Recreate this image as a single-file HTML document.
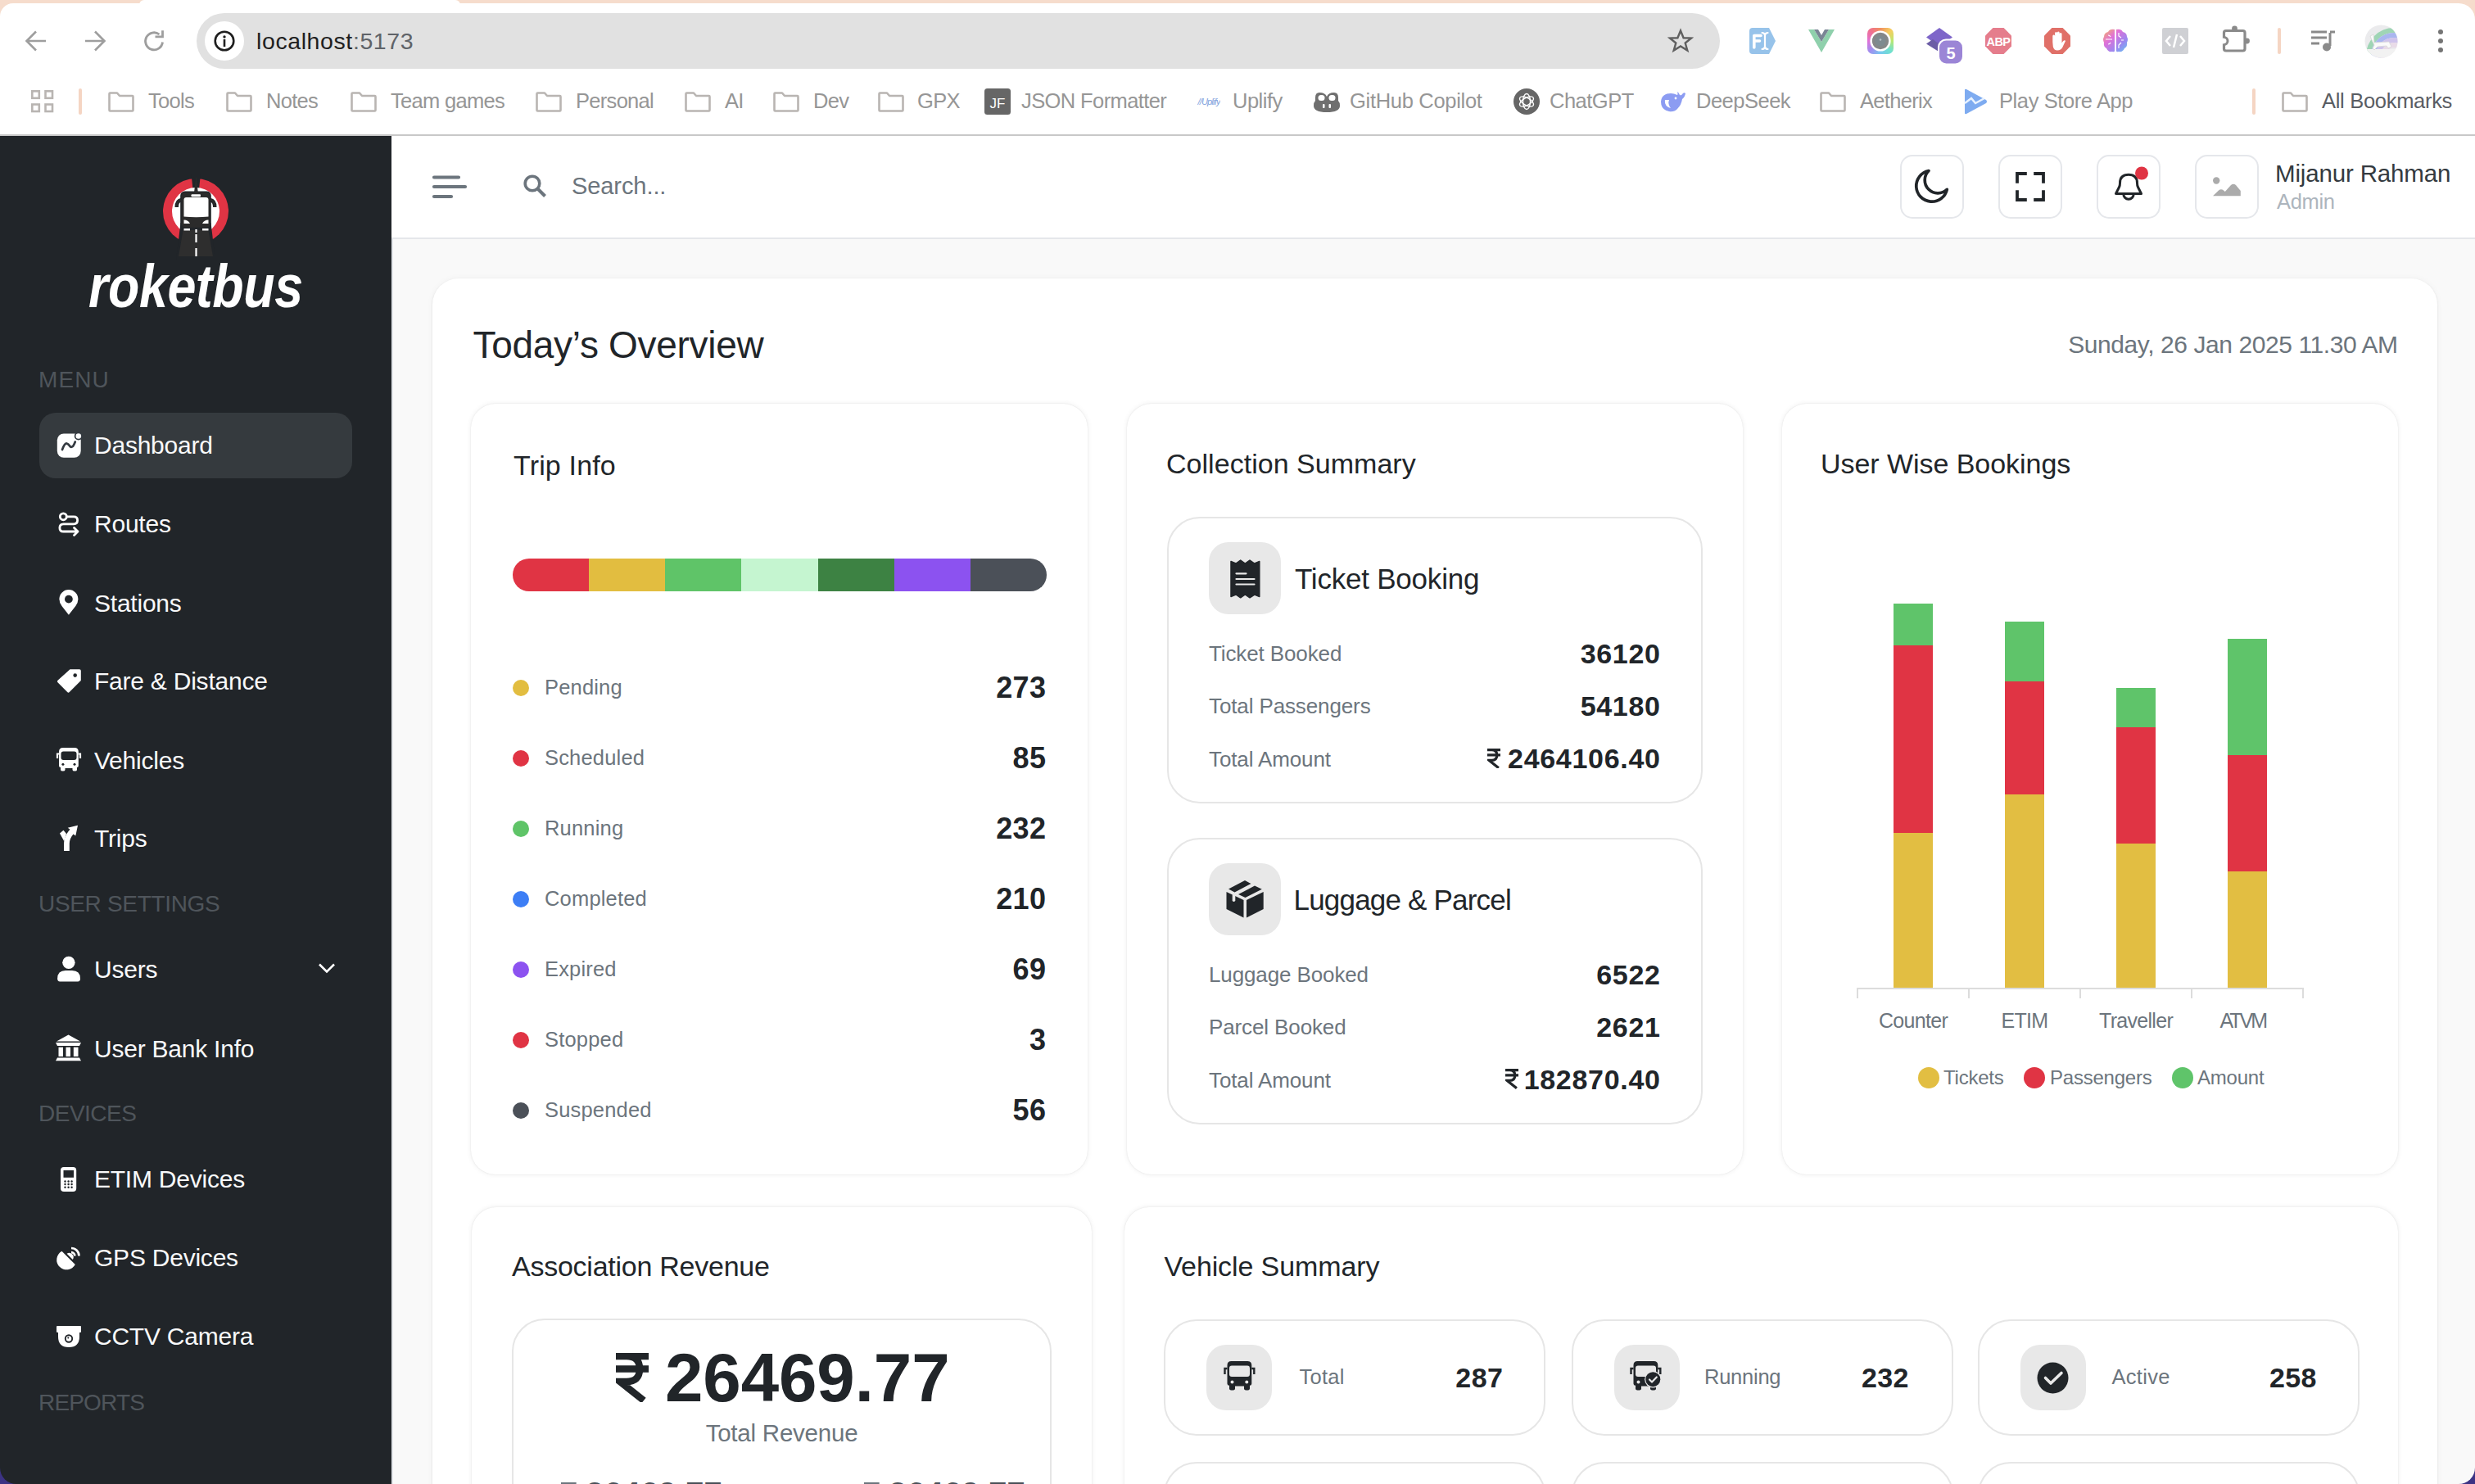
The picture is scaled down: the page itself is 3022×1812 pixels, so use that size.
<!DOCTYPE html>
<html><head><meta charset="utf-8"><title>roketbus</title>
<style>
*{box-sizing:border-box;margin:0;padding:0}
html,body{width:3022px;height:1812px;overflow:hidden;background:#f6dccc;font-family:"Liberation Sans",sans-serif;}
.a{position:absolute;display:block}
.t{position:absolute;white-space:nowrap;line-height:1}
</style></head><body>
<div class="a" style="left:0px;top:1740px;width:3022px;height:72px;background:#3c3384"></div>
<div class="a" style="left:0px;top:4px;width:3022px;height:162px;background:#fff;border-radius:16px 20px 0 0"></div>
<div class="a" style="left:170px;top:0px;width:392px;height:8px;background:#fff;border-radius:6px 6px 0 0"></div>
<div class="a" style="left:240px;top:16px;width:1860px;height:68px;background:#e1e1e1;border-radius:34px"></div>
<div class="a" style="left:250px;top:26px;width:48px;height:48px;background:#fff;border-radius:50%"></div>
<svg class="a" style="left:260px;top:36px;" width="28" height="28" viewBox="0 0 28 28"><circle cx="14" cy="14" r="11.3" fill="none" stroke="#1f1f1f" stroke-width="2.6"/><circle cx="14" cy="9" r="1.7" fill="#1f1f1f"/><rect x="12.7" y="12" width="2.6" height="9" fill="#1f1f1f"/></svg>
<svg class="a" style="left:28px;top:34px;" width="32" height="32" viewBox="0 0 32 32"><path d="M5 16H28M16 4.5L4.5 16L16 27.5" fill="none" stroke="#9e9e9e" stroke-width="2.6"/></svg>
<svg class="a" style="left:100px;top:34px;" width="32" height="32" viewBox="0 0 32 32"><path d="M27 16H4M16 4.5L27.5 16L16 27.5" fill="none" stroke="#9e9e9e" stroke-width="2.6"/></svg>
<svg class="a" style="left:172px;top:34px;" width="32" height="32" viewBox="0 0 32 32"><path d="M26.5 17.5A10.5 10.5 0 1 1 22.5 8" fill="none" stroke="#9e9e9e" stroke-width="2.8"/><path d="M17.5 10.8H26.5V3.2" fill="none" stroke="#9e9e9e" stroke-width="2.8"/></svg>
<div class="t" style="top:36.37px;font-size:28.5px;color:#1f1f1f;letter-spacing:0.6px;left:313px;">localhost<span style="color:#5f6368">:5173</span></div>
<svg class="a" style="left:2036px;top:34px;" width="32" height="32" viewBox="0 0 32 32"><path d="M16 3.5L19.6 12.3L29 12.6L21.7 18.5L24.3 27.6L16 22.4L7.7 27.6L10.3 18.5L3 12.6L12.4 12.3Z" fill="none" stroke="#5f5f5f" stroke-width="2.4" stroke-linejoin="miter"/></svg>
<svg class="a" style="left:2134px;top:34px;" width="36" height="32" viewBox="0 0 36 32"><path d="M2 4Q2 0 6 0H26L34 16L26 32H6Q2 32 2 28Z" fill="#97c3ea"/><path d="M7.8 24V9.5H16M7.8 16H14.5" stroke="#fff" stroke-width="3.6" fill="none" stroke-linecap="round" stroke-linejoin="round"/><path d="M17.5 6Q20 6 21 8.5Q22 6 24.5 6M21 8.5V23.5M17.5 26Q20 26 21 23.5Q22 26 24.5 26" stroke="#fff" stroke-width="2.2" fill="none" stroke-linecap="round"/></svg>
<svg class="a" style="left:2208px;top:34px;" width="32" height="32" viewBox="0 0 32 32"><path d="M0 2H7L16 17L25 2H32L16 30Z" fill="#8fd0ac"/><path d="M7 2H12L16 9L20 2H25L16 17Z" fill="#7a8595"/></svg>
<div class="a" style="left:2280px;top:34px;width:32px;height:32px;border-radius:7px;background:conic-gradient(from 0deg,#f09060,#f5cf60,#b8e870,#70e0d0,#78c8f0,#a090f0,#e070d8,#f07090,#f09060)"></div>
<svg class="a" style="left:2280px;top:34px;" width="32" height="32" viewBox="0 0 32 32"><circle cx="16" cy="16" r="12.6" fill="#fff"/><circle cx="16" cy="16" r="10.2" fill="#858789"/><circle cx="16" cy="16" r="6.5" fill="#7e8a90"/><circle cx="16" cy="14.5" r="1.3" fill="#b8c0c4"/></svg>
<svg class="a" style="left:2350px;top:32px;" width="48" height="48" viewBox="0 0 48 48"><path d="M2 13.5L18 2L34 13.5L18 25Z" fill="#7e66c9"/><path d="M2 21.5L10 16L18 22L26 16L18 31.5Z" fill="#6c5ea6"/><rect x="16" y="15.5" width="32" height="32" rx="10" fill="#fff"/><rect x="18" y="17.5" width="28" height="28" rx="8.5" fill="#9b85d6"/><text x="32" y="39.5" font-size="20" font-weight="700" fill="#fff" text-anchor="middle" font-family="Liberation Sans">5</text></svg>
<svg class="a" style="left:2424px;top:34px;" width="32" height="32" viewBox="0 0 32 32"><path d="M9.4 0H22.6L32 9.4V22.6L22.6 32H9.4L0 22.6V9.4Z" fill="#e57d8c"/><text x="16" y="21.8" font-size="14.5" font-weight="700" fill="#fff" text-anchor="middle" font-family="Liberation Sans" letter-spacing="-0.6">ABP</text></svg>
<svg class="a" style="left:2496px;top:34px;" width="32" height="32" viewBox="0 0 32 32"><path d="M9.4 0H22.6L32 9.4V22.6L22.6 32H9.4L0 22.6V9.4Z" fill="#e07068"/><path d="M10.3 17.5V10Q10.3 8.4 11.7 8.4Q13.1 8.4 13.1 10V15.5V6.5Q13.1 4.9 14.5 4.9Q15.9 4.9 15.9 6.5V15V6Q15.9 4.4 17.3 4.4Q18.7 4.4 18.7 6V15V7.5Q18.7 5.9 20.1 5.9Q21.5 5.9 21.5 7.5V18.5Q22.5 16.5 24 15.5Q25.5 14.8 26 16Q24 20 22.5 23.5Q20.5 27.5 16 27.5Q12 27.5 10.8 23Z" fill="#fff"/></svg>
<svg class="a" style="left:2566px;top:33px;" width="34" height="34" viewBox="0 0 34 34"><defs><linearGradient id="bg2" x1="0" y1="0" x2="1" y2="1"><stop offset="0" stop-color="#f5b860"/><stop offset=".35" stop-color="#e070d8"/><stop offset=".7" stop-color="#9a88f0"/><stop offset="1" stop-color="#60c8f0"/></linearGradient></defs><path d="M16 3Q10 2 8 6Q3 7 3 12Q1 15 3 19Q2 24 6 26Q8 31 13 30Q16 31 16 29ZM18 3Q24 2 26 6Q31 7 31 12Q33 15 31 19Q32 24 28 26Q26 31 21 30Q18 31 18 29Z" fill="url(#bg2)"/><path d="M5 15H13M8 10Q10 10 11 12M8 21Q10 21 11 19M21 7V11L24 13M24 19L21 22V26M27 16H24" stroke="#fff" stroke-width="1.2" fill="none"/></svg>
<svg class="a" style="left:2640px;top:34px;" width="32" height="32" viewBox="0 0 32 32"><rect width="32" height="32" rx="2" fill="#cfd0d4"/><path d="M10 10L5 16L10 22M22 10L27 16L22 22M18 8L14 24" stroke="#fff" stroke-width="2.5" fill="none"/></svg>
<svg class="a" style="left:2710px;top:30px;" width="40" height="38" viewBox="0 0 40 38"><rect x="5.5" y="7.5" width="25.5" height="24.5" rx="2.5" fill="none" stroke="#8a8a8a" stroke-width="3.2"/><circle cx="18.5" cy="5" r="3.4" fill="#8a8a8a"/><circle cx="33.5" cy="20" r="3.4" fill="#8a8a8a"/><circle cx="5" cy="20" r="3.6" fill="#fff"/><path d="M5.5 15.5A4.5 4.5 0 0 1 5.5 24.5" fill="none" stroke="#8a8a8a" stroke-width="3"/></svg>
<div class="a" style="left:2781px;top:34px;width:4px;height:32px;background:#f5d5c3;border-radius:2px"></div>
<svg class="a" style="left:2820px;top:36px;" width="34" height="28" viewBox="0 0 34 28"><path d="M2 3H21M2 10H21M2 17H12" stroke="#8a8a8a" stroke-width="3"/><path d="M25 4V20" stroke="#8a8a8a" stroke-width="3"/><path d="M25 3H31" stroke="#8a8a8a" stroke-width="3"/><circle cx="21" cy="21.5" r="5" fill="#8a8a8a"/></svg>
<svg class="a" style="left:2887px;top:30px;" width="41" height="41" viewBox="0 0 41 41"><defs><clipPath id="av"><circle cx="20.5" cy="20.5" r="20"/></clipPath></defs><g clip-path="url(#av)"><rect width="41" height="41" fill="#ebebed"/><circle cx="36" cy="38" r="31" fill="none" stroke="#9fd5b5" stroke-width="6"/><circle cx="36" cy="38" r="25" fill="none" stroke="#a9b6ef" stroke-width="6"/><circle cx="36" cy="38" r="19" fill="none" stroke="#cfc3ec" stroke-width="6"/><circle cx="36" cy="38" r="13" fill="none" stroke="#e9dbe8" stroke-width="6"/><rect y="30" width="41" height="11" fill="#f2f2f2"/><path d="M7 14L11 12L12 22L30 21L33 27L29 29L27 26L16 27L12 31L10 29L12 25L9 19Z" fill="#fafafa" stroke="#d8d8d8" stroke-width="0.8"/></g></svg>
<svg class="a" style="left:2972px;top:34px;" width="16" height="32" viewBox="0 0 16 32"><circle cx="8" cy="5" r="3" fill="#757575"/><circle cx="8" cy="16" r="3" fill="#757575"/><circle cx="8" cy="27" r="3" fill="#757575"/></svg>
<svg class="a" style="left:38px;top:110px;" width="28" height="28" viewBox="0 0 28 28"><g fill="none" stroke="#b9b5b2" stroke-width="2.6"><rect x="1.3" y="1.3" width="8.5" height="8.5"/><rect x="17.5" y="1.3" width="8.5" height="8.5"/><rect x="1.3" y="17.5" width="8.5" height="8.5"/><rect x="17.5" y="17.5" width="8.5" height="8.5"/></g></svg>
<div class="a" style="left:96px;top:108px;width:4px;height:32px;background:#f5d5c3;border-radius:2px"></div>
<svg class="a" style="left:132px;top:112px;" width="32" height="25" viewBox="0 0 32 25"><path d="M1.5 2.5Q1.5 1.5 2.5 1.5H11L14 5H29.5Q30.5 5 30.5 6V22.5Q30.5 23.5 29.5 23.5H2.5Q1.5 23.5 1.5 22.5Z" fill="none" stroke="#b9b5b2" stroke-width="2.6" stroke-linejoin="round"/></svg>
<div class="t" style="top:110.91px;font-size:25.5px;color:#969696;letter-spacing:-0.7px;left:181px;">Tools</div>
<svg class="a" style="left:276px;top:112px;" width="32" height="25" viewBox="0 0 32 25"><path d="M1.5 2.5Q1.5 1.5 2.5 1.5H11L14 5H29.5Q30.5 5 30.5 6V22.5Q30.5 23.5 29.5 23.5H2.5Q1.5 23.5 1.5 22.5Z" fill="none" stroke="#b9b5b2" stroke-width="2.6" stroke-linejoin="round"/></svg>
<div class="t" style="top:110.91px;font-size:25.5px;color:#969696;letter-spacing:-0.7px;left:325px;">Notes</div>
<svg class="a" style="left:428px;top:112px;" width="32" height="25" viewBox="0 0 32 25"><path d="M1.5 2.5Q1.5 1.5 2.5 1.5H11L14 5H29.5Q30.5 5 30.5 6V22.5Q30.5 23.5 29.5 23.5H2.5Q1.5 23.5 1.5 22.5Z" fill="none" stroke="#b9b5b2" stroke-width="2.6" stroke-linejoin="round"/></svg>
<div class="t" style="top:110.91px;font-size:25.5px;color:#969696;letter-spacing:-0.7px;left:477px;">Team games</div>
<svg class="a" style="left:654px;top:112px;" width="32" height="25" viewBox="0 0 32 25"><path d="M1.5 2.5Q1.5 1.5 2.5 1.5H11L14 5H29.5Q30.5 5 30.5 6V22.5Q30.5 23.5 29.5 23.5H2.5Q1.5 23.5 1.5 22.5Z" fill="none" stroke="#b9b5b2" stroke-width="2.6" stroke-linejoin="round"/></svg>
<div class="t" style="top:110.91px;font-size:25.5px;color:#969696;letter-spacing:-0.7px;left:703px;">Personal</div>
<svg class="a" style="left:836px;top:112px;" width="32" height="25" viewBox="0 0 32 25"><path d="M1.5 2.5Q1.5 1.5 2.5 1.5H11L14 5H29.5Q30.5 5 30.5 6V22.5Q30.5 23.5 29.5 23.5H2.5Q1.5 23.5 1.5 22.5Z" fill="none" stroke="#b9b5b2" stroke-width="2.6" stroke-linejoin="round"/></svg>
<div class="t" style="top:110.91px;font-size:25.5px;color:#969696;letter-spacing:-0.7px;left:885px;">AI</div>
<svg class="a" style="left:944px;top:112px;" width="32" height="25" viewBox="0 0 32 25"><path d="M1.5 2.5Q1.5 1.5 2.5 1.5H11L14 5H29.5Q30.5 5 30.5 6V22.5Q30.5 23.5 29.5 23.5H2.5Q1.5 23.5 1.5 22.5Z" fill="none" stroke="#b9b5b2" stroke-width="2.6" stroke-linejoin="round"/></svg>
<div class="t" style="top:110.91px;font-size:25.5px;color:#969696;letter-spacing:-0.7px;left:993px;">Dev</div>
<svg class="a" style="left:1072px;top:112px;" width="32" height="25" viewBox="0 0 32 25"><path d="M1.5 2.5Q1.5 1.5 2.5 1.5H11L14 5H29.5Q30.5 5 30.5 6V22.5Q30.5 23.5 29.5 23.5H2.5Q1.5 23.5 1.5 22.5Z" fill="none" stroke="#b9b5b2" stroke-width="2.6" stroke-linejoin="round"/></svg>
<div class="t" style="top:110.91px;font-size:25.5px;color:#969696;letter-spacing:-0.7px;left:1120px;">GPX</div>
<svg class="a" style="left:2222px;top:112px;" width="32" height="25" viewBox="0 0 32 25"><path d="M1.5 2.5Q1.5 1.5 2.5 1.5H11L14 5H29.5Q30.5 5 30.5 6V22.5Q30.5 23.5 29.5 23.5H2.5Q1.5 23.5 1.5 22.5Z" fill="none" stroke="#b9b5b2" stroke-width="2.6" stroke-linejoin="round"/></svg>
<div class="t" style="top:110.91px;font-size:25.5px;color:#969696;letter-spacing:-0.7px;left:2271px;">Aetherix</div>
<svg class="a" style="left:1202px;top:108px;" width="32" height="32" viewBox="0 0 32 32"><rect width="32" height="32" rx="3.5" fill="#666"/><text x="16" y="23.5" font-size="17" fill="#fff" text-anchor="middle" font-family="Liberation Sans">JF</text></svg>
<div class="t" style="top:110.91px;font-size:25.5px;color:#969696;letter-spacing:-0.6px;left:1247px;">JSON Formatter</div>
<svg class="a" style="left:1462px;top:116px;" width="28" height="16" viewBox="0 0 28 16"><text x="14" y="12" font-size="11" fill="#7da0dc" text-anchor="middle" font-family="Liberation Sans" font-style="italic" letter-spacing="-0.8">//Uplify</text></svg>
<div class="t" style="top:110.91px;font-size:25.5px;color:#969696;letter-spacing:-0.5px;left:1505px;">Uplify</div>
<svg class="a" style="left:1604px;top:110px;" width="32" height="28" viewBox="0 0 32 28"><path d="M7 3Q2 3 2 9V13Q0 15 0 19Q0 27 16 27Q32 27 32 19Q32 15 30 13V9Q30 3 25 3Q18 3 16 8Q14 3 7 3Z" fill="#6f6f6f"/><rect x="5.5" y="6" width="8" height="7" rx="3.5" fill="#fff"/><rect x="18.5" y="6" width="8" height="7" rx="3.5" fill="#fff"/><rect x="11" y="17" width="2.5" height="5" rx="1" fill="#fff"/><rect x="18.5" y="17" width="2.5" height="5" rx="1" fill="#fff"/></svg>
<div class="t" style="top:110.91px;font-size:25.5px;color:#969696;letter-spacing:-0.3px;left:1648px;">GitHub Copilot</div>
<svg class="a" style="left:1848px;top:108px;" width="32" height="32" viewBox="0 0 32 32"><circle cx="16" cy="16" r="16" fill="#666"/><g fill="none" stroke="#fff" stroke-width="1.4"><ellipse cx="16" cy="16" rx="4.5" ry="9.5"/><ellipse cx="16" cy="16" rx="4.5" ry="9.5" transform="rotate(60 16 16)"/><ellipse cx="16" cy="16" rx="4.5" ry="9.5" transform="rotate(-60 16 16)"/></g></svg>
<div class="t" style="top:110.91px;font-size:25.5px;color:#969696;letter-spacing:-0.5px;left:1892px;">ChatGPT</div>
<svg class="a" style="left:2026px;top:110px;" width="34" height="28" viewBox="0 0 34 28"><path d="M32 4Q30 2 28 5Q27 7 25 6Q24 3 22 2Q23 5 22 6Q18 4 14 4Q3 4 2 14Q2 24 12 26Q18 27 22 23Q27 18 28 11Q31 9 32 4Z" fill="#8c9cf2"/><path d="M7 12Q6 20 14 22Q10 17 12 12Z" fill="#fff"/><circle cx="20" cy="10" r="1.4" fill="#fff"/></svg>
<div class="t" style="top:110.91px;font-size:25.5px;color:#969696;letter-spacing:-0.5px;left:2071px;">DeepSeek</div>
<svg class="a" style="left:2397px;top:108px;" width="30" height="32" viewBox="0 0 30 32"><path d="M2 2Q2 0 4 1L28 14Q30 16 28 18L4 31Q2 32 2 30Z" fill="#7eabf0"/><path d="M2 18L10 12L15 18L26 12" fill="none" stroke="#e8f2ff" stroke-width="2.5"/></svg>
<div class="t" style="top:110.91px;font-size:25.5px;color:#969696;letter-spacing:-0.4px;left:2441px;">Play Store App</div>
<div class="a" style="left:2750px;top:108px;width:4px;height:32px;background:#f5d5c3;border-radius:2px"></div>
<svg class="a" style="left:2786px;top:112px;" width="32" height="25" viewBox="0 0 32 25"><path d="M1.5 2.5Q1.5 1.5 2.5 1.5H11L14 5H29.5Q30.5 5 30.5 6V22.5Q30.5 23.5 29.5 23.5H2.5Q1.5 23.5 1.5 22.5Z" fill="none" stroke="#b9b5b2" stroke-width="2.6" stroke-linejoin="round"/></svg>
<div class="t" style="top:110.91px;font-size:25.5px;color:#5a5d63;letter-spacing:-0.3px;left:2835px;">All Bookmarks</div>
<div class="a" style="left:0px;top:164px;width:3022px;height:2px;background:#c8c8c8"></div>
<div class="a" style="left:0px;top:166px;width:478px;height:1646px;background:#212529;border-radius:0 0 0 20px"></div>
<svg class="a" style="left:190px;top:205px" width="100" height="115" viewBox="190 205 100 115">
<circle cx="239" cy="258" r="40" fill="#e03444"/>
<polygon points="233.5,212 245,212 242.5,236 236,236" fill="#212529"/>
<circle cx="239" cy="258" r="29" fill="#fff"/>
<polygon points="220.5,272 257.5,272 263,318 215,318" fill="#212529"/>
<rect x="220.2" y="233.4" width="37.6" height="46" rx="5.5" fill="#212529"/>
<path d="M215.7 253Q215.7 245 221.5 244" fill="none" stroke="#212529" stroke-width="4.4"/>
<path d="M262.3 253Q262.3 245 256.5 244" fill="none" stroke="#212529" stroke-width="4.4"/>
<path d="M215.7 253Q215.7 245 221.5 244" fill="none" stroke="#2b2b2b" stroke-width="2.2"/>
<path d="M262.3 253Q262.3 245 256.5 244" fill="none" stroke="#2b2b2b" stroke-width="2.2"/>
<polygon points="223.6,281 254.4,281 260,313 218,313" fill="#2e2e2e"/>
<rect x="221.6" y="234.8" width="34.8" height="43" rx="4.5" fill="#2b2b2b"/>
<polygon points="237,235 241.8,235 239.4,215" fill="#2b2b2b"/>
<path d="M224.5 244Q224.5 241 227.5 241H251.5Q254.5 241 254.5 244V264.5Q239.5 266 224.5 264.5Z" fill="#fff"/>
<rect x="233.5" y="237.2" width="11.5" height="3" rx="1" fill="#fff"/>
<path d="M224.5 268.5Q230 268.5 232 273H224.5Z" fill="#fff"/>
<path d="M254.5 268.5Q249 268.5 247 273H254.5Z" fill="#fff"/>
<rect x="224.5" y="279" width="7.5" height="2.5" fill="#fff"/>
<rect x="247" y="279" width="7.5" height="2.5" fill="#fff"/>
<rect x="238.4" y="280" width="2.2" height="4" fill="#fff"/>
<rect x="238.4" y="286" width="2.2" height="10" fill="#fff"/>
<rect x="238.4" y="303" width="2.2" height="10" fill="#fff"/>
</svg>
<div class="t" style="left:108px;top:313px;font-size:74px;font-weight:700;font-style:italic;color:#fff;transform:scaleX(0.848);transform-origin:0 0;letter-spacing:-0.5px">roketbus</div>
<div class="t" style="top:449.60px;font-size:28px;color:#4f555b;letter-spacing:1.1px;left:47px;">MENU</div>
<div class="t" style="top:1089.80px;font-size:28px;color:#4f555b;letter-spacing:-0.32px;left:47px;">USER SETTINGS</div>
<div class="t" style="top:1346.30px;font-size:28px;color:#4f555b;letter-spacing:-0.5px;left:47px;">DEVICES</div>
<div class="t" style="top:1699.10px;font-size:28px;color:#4f555b;letter-spacing:-0.83px;left:47px;">REPORTS</div>
<div class="a" style="left:48px;top:504px;width:382px;height:80px;background:#353a3e;border-radius:20px"></div>
<div class="t" style="top:529.40px;font-size:30px;color:#f8f9fa;letter-spacing:-0.23px;left:115px;">Dashboard</div>
<div class="t" style="top:625.20px;font-size:30px;color:#f8f9fa;letter-spacing:-0.23px;left:115px;">Routes</div>
<div class="t" style="top:721.60px;font-size:30px;color:#f8f9fa;letter-spacing:-0.23px;left:115px;">Stations</div>
<div class="t" style="top:817.30px;font-size:30px;color:#f8f9fa;letter-spacing:-0.23px;left:115px;">Fare &amp; Distance</div>
<div class="t" style="top:913.60px;font-size:30px;color:#f8f9fa;letter-spacing:-0.23px;left:115px;">Vehicles</div>
<div class="t" style="top:1009.40px;font-size:30px;color:#f8f9fa;letter-spacing:-0.23px;left:115px;">Trips</div>
<div class="t" style="top:1169.10px;font-size:30px;color:#f8f9fa;letter-spacing:-0.23px;left:115px;">Users</div>
<div class="t" style="top:1265.60px;font-size:30px;color:#f8f9fa;letter-spacing:-0.23px;left:115px;">User Bank Info</div>
<div class="t" style="top:1424.60px;font-size:30px;color:#f8f9fa;letter-spacing:-0.23px;left:115px;">ETIM Devices</div>
<div class="t" style="top:1520.60px;font-size:30px;color:#f8f9fa;letter-spacing:-0.23px;left:115px;">GPS Devices</div>
<div class="t" style="top:1617.00px;font-size:30px;color:#f8f9fa;letter-spacing:-0.23px;left:115px;">CCTV Camera</div>
<svg class="a" style="left:60px;top:515px;" width="50" height="50" viewBox="0 0 50 50"><rect x="9.8" y="14.5" width="28.9" height="29.3" rx="8" fill="#fff"/><circle cx="35.8" cy="17.5" r="5" fill="#343a40"/><circle cx="35.8" cy="17.5" r="3.3" fill="#fff"/><path d="M16 34Q19 26 21.5 26.5Q23.5 27 25.5 30Q27 31.5 29 30Q30.5 28 31.8 24.5" fill="none" stroke="#343a40" stroke-width="2.7" stroke-linecap="round"/></svg>
<svg class="a" style="left:60px;top:615px;" width="50" height="50" viewBox="0 0 50 50"><g fill="none" stroke="#fff" stroke-width="2.8" stroke-linecap="round" stroke-linejoin="round"><circle cx="17.3" cy="15.8" r="4"/><path d="M21.3 15.8H30Q34.6 15.8 34.6 20.3Q34.6 24.8 30 24.8H17.5Q12.9 24.8 12.9 29.4Q12.9 34 17.5 34H35M30.5 29.5L35 34L30.5 38.5"/></g></svg>
<svg class="a" style="left:60px;top:710px;" width="50" height="50" viewBox="0 0 50 50"><path d="M23.9 40.7L15.5 30Q12.4 26 12.4 21.6A11.5 11.5 0 0 1 35.4 21.6Q35.4 26 32.3 30Z" fill="#fff"/><circle cx="23.9" cy="21.6" r="4.9" fill="#212529"/></svg>
<svg class="a" style="left:60px;top:805px;" width="50" height="50" viewBox="0 0 50 50"><path d="M25.5 12.2H37Q38.8 12.2 38.8 14V26L24.8 40Q23.5 41.3 22.2 40L10.5 28.3Q9.2 27 10.5 25.7Z" fill="#fff"/><circle cx="31.7" cy="19.6" r="2.3" fill="#212529"/></svg>
<svg class="a" style="left:60px;top:900px;" width="50" height="50" viewBox="0 0 50 50"><path d="M17 13H31Q35.8 13 35.8 18V35Q35.8 37 34 37V40Q34 41.5 31.2 41.5Q28.5 41.5 28.5 40V38H19.5V40Q19.5 41.5 16.8 41.5Q14 41.5 14 40V37Q12 37 12 35V18Q12 13 17 13Z" fill="#fff"/><rect x="14.5" y="17.5" width="19" height="10.5" rx="3" fill="#212529"/><circle cx="16.9" cy="33.2" r="1.5" fill="#212529"/><circle cx="31" cy="33.2" r="1.5" fill="#212529"/><path d="M12 20.5H10V26M36 20.5H38V26" fill="none" stroke="#fff" stroke-width="2.2"/></svg>
<svg class="a" style="left:60px;top:995px;" width="50" height="50" viewBox="0 0 50 50"><path d="M18 44H24.8V35Q24.8 29 29.5 23.5L32.3 25.5L35 12.8L22.7 15.8L25.5 17.8Q18 26 18 35Z" fill="#fff"/><path d="M13 22.5L17.5 18.7L21 23L18.2 32Z" fill="#fff"/></svg>
<svg class="a" style="left:60px;top:1158px;" width="50" height="50" viewBox="0 0 50 50"><circle cx="23.9" cy="17.35" r="7.7" fill="#fff"/><path d="M10.1 37Q10.1 27 20 27H28Q38 27 38 37Q38 40.4 35 40.4H13.1Q10.1 40.4 10.1 37Z" fill="#fff"/></svg>
<svg class="a" style="left:60px;top:1255px;" width="50" height="50" viewBox="0 0 50 50"><path d="M23.5 8.5L38 16.5H9Z" fill="#fff"/><path d="M8 18H39L37 22H10Z" fill="#fff"/><rect x="11.5" y="23.7" width="5.5" height="11.3" fill="#fff"/><rect x="20.5" y="23.7" width="5.5" height="11.3" fill="#fff"/><rect x="29.8" y="23.7" width="5.7" height="11.3" fill="#fff"/><path d="M10 36.5H37L39 40.3H8Z" fill="#fff"/></svg>
<svg class="a" style="left:60px;top:1415px;" width="50" height="50" viewBox="0 0 50 50"><rect x="14" y="10" width="19.2" height="30" rx="4" fill="#fff"/><rect x="17.5" y="14" width="12.5" height="8.8" fill="#212529"/><circle cx="19.5" cy="27.5" r="1.2" fill="#212529"/><circle cx="19.5" cy="31" r="1.2" fill="#212529"/><circle cx="19.5" cy="34.7" r="1.2" fill="#212529"/><circle cx="23.6" cy="27.5" r="1.2" fill="#212529"/><circle cx="23.6" cy="31" r="1.2" fill="#212529"/><circle cx="23.6" cy="34.7" r="1.2" fill="#212529"/><circle cx="27.6" cy="27.5" r="1.2" fill="#212529"/><circle cx="27.6" cy="31" r="1.2" fill="#212529"/><circle cx="27.6" cy="34.7" r="1.2" fill="#212529"/></svg>
<svg class="a" style="left:60px;top:1510px;" width="50" height="50" viewBox="0 0 50 50"><path d="M15.5 17.8L31.8 34A12 12 0 1 1 15.5 17.8Z" fill="#fff"/><path d="M21.6 20.8A5.2 5.2 0 0 1 28.8 28Z" fill="#fff"/><path d="M27 14A9.5 9.5 0 0 1 36.5 23.5M27 19.2A4.3 4.3 0 0 1 31.3 23.5" fill="none" stroke="#fff" stroke-width="2.7"/></svg>
<svg class="a" style="left:60px;top:1607px;" width="50" height="50" viewBox="0 0 50 50"><rect x="9" y="12" width="30" height="8" rx="1" fill="#fff"/><path d="M11 19V25Q11 38 24 38Q37 38 37 25V19Z" fill="#fff"/><circle cx="24" cy="27.5" r="4.2" fill="none" stroke="#212529" stroke-width="1.9"/><circle cx="23.3" cy="26.5" r="1" fill="#212529"/></svg>
<svg class="a" style="left:386px;top:1172px;" width="26" height="22" viewBox="0 0 26 22"><path d="M4 5.5L13 14.5L22 5.5" fill="none" stroke="#fff" stroke-width="2.6"/></svg>
<div class="a" style="left:478px;top:166px;width:2544px;height:126px;background:#fff;border-bottom:2px solid #e5e7eb"></div>
<div class="a" style="left:478px;top:292px;width:2544px;height:1520px;background:#f9f9f9;border-radius:0 0 20px 0"></div>
<div class="a" style="left:478px;top:292px;width:2px;height:1520px;background:#e3e6ea"></div>
<svg class="a" style="left:524px;top:210px;" width="48" height="36" viewBox="0 0 48 36"><path d="M6 6.5H36M6 18H44M6 30H27" stroke="#6c757d" stroke-width="4.2" stroke-linecap="round"/></svg>
<svg class="a" style="left:636px;top:210px;" width="34" height="34" viewBox="0 0 34 34"><circle cx="14" cy="14" r="8.8" fill="none" stroke="#6c757d" stroke-width="3.6"/><path d="M20.5 20.5L29.5 29.5" stroke="#6c757d" stroke-width="4" stroke-linecap="butt"/></svg>
<div class="t" style="top:213.45px;font-size:29px;color:#6c757d;letter-spacing:-0.08px;left:698px;">Search...</div>
<div class="a" style="left:2320px;top:189px;width:78px;height:78px;background:#fff;border:2px solid #e5e7eb;border-radius:15px"></div>
<div class="a" style="left:2440px;top:189px;width:78px;height:78px;background:#fff;border:2px solid #e5e7eb;border-radius:15px"></div>
<div class="a" style="left:2560px;top:189px;width:78px;height:78px;background:#fff;border:2px solid #e5e7eb;border-radius:15px"></div>
<div class="a" style="left:2680px;top:189px;width:78px;height:78px;background:#fff;border:2px solid #e5e7eb;border-radius:15px"></div>
<svg class="a" style="left:2320px;top:189px;" width="80" height="80" viewBox="1 1 80 80"><path d="M36 20.5A19 19 0 1 0 58.3 43.3A15.5 15.5 0 0 1 36 20.5Z" fill="none" stroke="#212529" stroke-width="3.7" stroke-linejoin="round"/></svg>
<svg class="a" style="left:2440px;top:189px;" width="80" height="80" viewBox="1 1 80 80"><path d="M24 35.8V24H35.8M44.2 24H56V35.8M56 44.2V56H44.2M35.8 56H24V44.2" fill="none" stroke="#212529" stroke-width="3.8"/></svg>
<svg class="a" style="left:2560px;top:189px;" width="80" height="80" viewBox="1 1 80 80"><path d="M24.5 48.5H55.5L51.5 40.5Q50.5 38.5 50.5 35.5Q50.5 25.3 40 25.3Q29.5 25.3 29.5 35.5Q29.5 38.5 28.5 40.5Z" fill="none" stroke="#212529" stroke-width="3" stroke-linejoin="round"/><path d="M33.8 49A6.2 6.2 0 0 0 46.2 49" fill="none" stroke="#212529" stroke-width="3"/><circle cx="56" cy="23.5" r="8" fill="#e03444"/></svg>
<svg class="a" style="left:2680px;top:189px;" width="80" height="80" viewBox="1 1 80 80"><circle cx="27.2" cy="32.5" r="4.2" fill="#ababab"/><path d="M23 51.3L30 44.5Q33 42 36 44.5L37.8 46L45 38Q48 35.5 51 38L56.8 45V51.3Z" fill="#ababab"/></svg>
<div class="t" style="top:197.03px;font-size:29.5px;color:#343a40;letter-spacing:-0.16px;left:2778px;">Mijanur Rahman</div>
<div class="t" style="top:234.11px;font-size:25.5px;color:#adb5bd;letter-spacing:-0.35px;left:2780px;">Admin</div>
<div class="a" style="left:528px;top:340px;width:2448px;height:1600px;background:#fff;border-radius:32px;box-shadow:0 1px 3px rgba(0,0,0,0.09),0 0 8px rgba(0,0,0,0.04)"></div>
<div class="t" style="top:398.06px;font-size:46px;color:#212529;letter-spacing:-0.29px;left:577.5px;">Today&#8217;s Overview</div>
<div class="t" style="top:405.80px;font-size:30px;color:#6c757d;letter-spacing:-0.42px;right:94px;margin-right:0.42px;">Sunday, 26 Jan 2025 11.30 AM</div>
<div class="a" style="left:575px;top:493px;width:753px;height:941px;background:#fff;border-radius:30px;box-shadow:0 0 1.5px rgba(0,0,0,0.10),0 0 6px rgba(0,0,0,0.08)"></div>
<div class="t" style="top:551.22px;font-size:34px;color:#212529;letter-spacing:0.16px;left:627px;">Trip Info</div>
<div class="a" style="left:626px;top:682px;width:652px;height:40px;border-radius:20px;overflow:hidden;display:flex"><div style="flex:1;background:#e03444"></div><div style="flex:1;background:#e2bd40"></div><div style="flex:1;background:#5fc468"></div><div style="flex:1;background:#c5f5d0"></div><div style="flex:1;background:#3d8243"></div><div style="flex:1;background:#8c52f0"></div><div style="flex:1;background:#4b5058"></div></div>
<div class="a" style="left:626px;top:830px;width:20px;height:20px;background:#e2bd40;border-radius:50%"></div>
<div class="t" style="top:826.71px;font-size:25.5px;color:#6c757d;letter-spacing:0.18px;left:665px;">Pending</div>
<div class="t" style="top:822.32px;font-size:36px;color:#212529;font-weight:700;letter-spacing:0.4px;right:1745px;margin-right:-0.4px;">273</div>
<div class="a" style="left:626px;top:916px;width:20px;height:20px;background:#e03444;border-radius:50%"></div>
<div class="t" style="top:912.71px;font-size:25.5px;color:#6c757d;letter-spacing:0.18px;left:665px;">Scheduled</div>
<div class="t" style="top:908.32px;font-size:36px;color:#212529;font-weight:700;letter-spacing:0.4px;right:1745px;margin-right:-0.4px;">85</div>
<div class="a" style="left:626px;top:1002px;width:20px;height:20px;background:#5fc468;border-radius:50%"></div>
<div class="t" style="top:998.71px;font-size:25.5px;color:#6c757d;letter-spacing:0.18px;left:665px;">Running</div>
<div class="t" style="top:994.32px;font-size:36px;color:#212529;font-weight:700;letter-spacing:0.4px;right:1745px;margin-right:-0.4px;">232</div>
<div class="a" style="left:626px;top:1088px;width:20px;height:20px;background:#3d7ef5;border-radius:50%"></div>
<div class="t" style="top:1084.71px;font-size:25.5px;color:#6c757d;letter-spacing:0.18px;left:665px;">Completed</div>
<div class="t" style="top:1080.32px;font-size:36px;color:#212529;font-weight:700;letter-spacing:0.4px;right:1745px;margin-right:-0.4px;">210</div>
<div class="a" style="left:626px;top:1174px;width:20px;height:20px;background:#8c52f0;border-radius:50%"></div>
<div class="t" style="top:1170.71px;font-size:25.5px;color:#6c757d;letter-spacing:0.18px;left:665px;">Expired</div>
<div class="t" style="top:1166.32px;font-size:36px;color:#212529;font-weight:700;letter-spacing:0.4px;right:1745px;margin-right:-0.4px;">69</div>
<div class="a" style="left:626px;top:1260px;width:20px;height:20px;background:#e03444;border-radius:50%"></div>
<div class="t" style="top:1256.71px;font-size:25.5px;color:#6c757d;letter-spacing:0.18px;left:665px;">Stopped</div>
<div class="t" style="top:1252.32px;font-size:36px;color:#212529;font-weight:700;letter-spacing:0.4px;right:1745px;margin-right:-0.4px;">3</div>
<div class="a" style="left:626px;top:1346px;width:20px;height:20px;background:#4b5058;border-radius:50%"></div>
<div class="t" style="top:1342.71px;font-size:25.5px;color:#6c757d;letter-spacing:0.18px;left:665px;">Suspended</div>
<div class="t" style="top:1338.32px;font-size:36px;color:#212529;font-weight:700;letter-spacing:0.4px;right:1745px;margin-right:-0.4px;">56</div>
<div class="a" style="left:1376px;top:493px;width:752px;height:941px;background:#fff;border-radius:30px;box-shadow:0 0 1.5px rgba(0,0,0,0.10),0 0 6px rgba(0,0,0,0.08)"></div>
<div class="t" style="top:549.22px;font-size:34px;color:#212529;letter-spacing:0.03px;left:1424px;">Collection Summary</div>
<div class="a" style="left:1425px;top:631px;width:654px;height:350px;background:#fff;border:2px solid #e6e6e6;border-radius:40px"></div>
<div class="a" style="left:1476px;top:662px;width:88px;height:88px;background:#e8e8e8;border-radius:24px"></div>
<svg class="a" style="left:1475px;top:660px;" width="90" height="90" viewBox="0 0 90 90"><path d="M28 25.5L34 28L39.7 24L45.3 28L51 24L56.8 28L62.8 25.5V68.5L56.8 66L51 69.8L45.3 66L39.7 69.8L34 66L28 68.5Z" fill="#212529" stroke="#212529" stroke-width="1.5" stroke-linejoin="round"/><path d="M34.5 40.3H46.5M34.5 47H56.5M34.5 53.5H56.5" stroke="#e8e8e8" stroke-width="2.2" stroke-linecap="round"/></svg>
<div class="t" style="top:688.87px;font-size:35px;color:#212529;letter-spacing:-0.22px;left:1581px;">Ticket Booking</div>
<div class="t" style="top:784.99px;font-size:26px;color:#6c757d;letter-spacing:-0.12px;left:1476px;">Ticket Booked</div>
<div class="t" style="top:780.72px;font-size:34px;color:#212529;font-weight:700;letter-spacing:0.7px;right:995px;margin-right:-0.7px;">36120</div>
<div class="t" style="top:849.29px;font-size:26px;color:#6c757d;letter-spacing:-0.12px;left:1476px;">Total Passengers</div>
<div class="t" style="top:845.02px;font-size:34px;color:#212529;font-weight:700;letter-spacing:0.7px;right:995px;margin-right:-0.7px;">54180</div>
<div class="t" style="top:913.59px;font-size:26px;color:#6c757d;letter-spacing:-0.12px;left:1476px;">Total Amount</div>
<div class="t" style="top:909.32px;font-size:34px;color:#212529;font-weight:700;letter-spacing:0.7px;right:995px;margin-right:-0.7px;">2464106.40</div>
<div class="a" style="left:1425px;top:1023px;width:654px;height:350px;background:#fff;border:2px solid #e6e6e6;border-radius:40px"></div>
<div class="a" style="left:1476px;top:1054px;width:88px;height:88px;background:#e8e8e8;border-radius:24px"></div>
<svg class="a" style="left:1475px;top:1052px;" width="90" height="90" viewBox="0 0 90 90"><path d="M22.5 37L43.5 47V68.5L22.5 58Z" fill="#212529"/><path d="M47 47L67.7 37V58L47 68.5Z" fill="#212529"/><path d="M25 33.5L45 23L52.5 27L32.5 37.5Z" fill="#212529"/><path d="M37 40L57 29.5L65.8 33.8L45.5 44Z" fill="#212529"/><rect x="29.7" y="39" width="3.6" height="10" rx="1.8" fill="#e8e8e8"/></svg>
<div class="t" style="top:1080.87px;font-size:35px;color:#212529;letter-spacing:-0.8px;left:1579.5px;">Luggage &amp; Parcel</div>
<div class="t" style="top:1176.99px;font-size:26px;color:#6c757d;letter-spacing:-0.12px;left:1476px;">Luggage Booked</div>
<div class="t" style="top:1172.72px;font-size:34px;color:#212529;font-weight:700;letter-spacing:0.7px;right:995px;margin-right:-0.7px;">6522</div>
<div class="t" style="top:1241.29px;font-size:26px;color:#6c757d;letter-spacing:-0.12px;left:1476px;">Parcel Booked</div>
<div class="t" style="top:1237.02px;font-size:34px;color:#212529;font-weight:700;letter-spacing:0.7px;right:995px;margin-right:-0.7px;">2621</div>
<div class="t" style="top:1305.59px;font-size:26px;color:#6c757d;letter-spacing:-0.12px;left:1476px;">Total Amount</div>
<div class="t" style="top:1301.32px;font-size:34px;color:#212529;font-weight:700;letter-spacing:0.7px;right:995px;margin-right:-0.7px;">182870.40</div>
<svg class="a" style="left:1816px;top:913.5px;" width="16.33" height="24.5" viewBox="0 0 40 60"><path d="M0 4H40M0 19.5H40M2 4H13Q29 4 29 19.5Q29 35 13 35H5L34 58" fill="none" stroke="#212529" stroke-width="8" stroke-linejoin="miter"/></svg>
<svg class="a" style="left:1838px;top:1305px;" width="16.33" height="24.5" viewBox="0 0 40 60"><path d="M0 4H40M0 19.5H40M2 4H13Q29 4 29 19.5Q29 35 13 35H5L34 58" fill="none" stroke="#212529" stroke-width="8" stroke-linejoin="miter"/></svg>
<div class="a" style="left:2176px;top:493px;width:752px;height:941px;background:#fff;border-radius:30px;box-shadow:0 0 1.5px rgba(0,0,0,0.10),0 0 6px rgba(0,0,0,0.08)"></div>
<div class="t" style="top:549.22px;font-size:34px;color:#212529;letter-spacing:-0.05px;left:2223px;">User Wise Bookings</div>
<div class="a" style="left:2312px;top:737px;width:48px;height:52px;background:#5fc46a"></div>
<div class="a" style="left:2312px;top:788px;width:48px;height:230px;background:#e03444"></div>
<div class="a" style="left:2312px;top:1017px;width:48px;height:189px;background:#e2be42"></div>
<div class="a" style="left:2448px;top:759px;width:48px;height:74px;background:#5fc46a"></div>
<div class="a" style="left:2448px;top:832px;width:48px;height:139px;background:#e03444"></div>
<div class="a" style="left:2448px;top:970px;width:48px;height:236px;background:#e2be42"></div>
<div class="a" style="left:2584px;top:840px;width:48px;height:49px;background:#5fc46a"></div>
<div class="a" style="left:2584px;top:888px;width:48px;height:143px;background:#e03444"></div>
<div class="a" style="left:2584px;top:1030px;width:48px;height:176px;background:#e2be42"></div>
<div class="a" style="left:2720px;top:780px;width:48px;height:143px;background:#5fc46a"></div>
<div class="a" style="left:2720px;top:922px;width:48px;height:143px;background:#e03444"></div>
<div class="a" style="left:2720px;top:1064px;width:48px;height:142px;background:#e2be42"></div>
<div class="a" style="left:2267px;top:1205.5px;width:546px;height:2px;background:#dcdcdc"></div>
<div class="a" style="left:2267px;top:1205.5px;width:2px;height:13px;background:#dcdcdc"></div>
<div class="a" style="left:2403px;top:1205.5px;width:2px;height:13px;background:#dcdcdc"></div>
<div class="a" style="left:2539px;top:1205.5px;width:2px;height:13px;background:#dcdcdc"></div>
<div class="a" style="left:2675px;top:1205.5px;width:2px;height:13px;background:#dcdcdc"></div>
<div class="a" style="left:2811px;top:1205.5px;width:2px;height:13px;background:#dcdcdc"></div>
<div class="t" style="top:1234.43px;font-size:25px;color:#6c757d;letter-spacing:-0.7px;left:2336px;transform:translateX(-50%);">Counter</div>
<div class="t" style="top:1234.43px;font-size:25px;color:#6c757d;letter-spacing:-0.7px;left:2472px;transform:translateX(-50%);">ETIM</div>
<div class="t" style="top:1234.43px;font-size:25px;color:#6c757d;letter-spacing:-0.7px;left:2608px;transform:translateX(-50%);">Traveller</div>
<div class="t" style="top:1234.43px;font-size:25px;color:#6c757d;letter-spacing:-3px;left:2710.5px;">ATVM</div>
<div class="a" style="left:2342px;top:1302.5px;width:26px;height:26px;background:#e2be42;border-radius:50%"></div>
<div class="t" style="top:1303.68px;font-size:24px;color:#6c757d;letter-spacing:-0.23px;left:2373px;">Tickets</div>
<div class="a" style="left:2471px;top:1302.5px;width:26px;height:26px;background:#e03444;border-radius:50%"></div>
<div class="t" style="top:1303.68px;font-size:24px;color:#6c757d;letter-spacing:-0.23px;left:2503px;">Passengers</div>
<div class="a" style="left:2652px;top:1302.5px;width:26px;height:26px;background:#5fc46a;border-radius:50%"></div>
<div class="t" style="top:1303.68px;font-size:24px;color:#6c757d;letter-spacing:-0.23px;left:2683px;">Amount</div>
<div class="a" style="left:576px;top:1474px;width:757px;height:500px;background:#fff;border-radius:30px;box-shadow:0 0 1.5px rgba(0,0,0,0.10),0 0 6px rgba(0,0,0,0.08)"></div>
<div class="t" style="top:1529.02px;font-size:34px;color:#212529;letter-spacing:-0.25px;left:625px;">Association Revenue</div>
<div class="a" style="left:625px;top:1610px;width:659px;height:400px;background:#fff;border:2px solid #e6e6e6;border-radius:40px"></div>
<svg class="a" style="left:751.5px;top:1652.2px;" width="40.0" height="60" viewBox="0 0 40 60"><path d="M0 4H40M0 19.5H40M2 4H13Q29 4 29 19.5Q29 35 13 35H5L34 58" fill="none" stroke="#212529" stroke-width="8.5" stroke-linejoin="miter"/></svg>
<div class="t" style="top:1641.31px;font-size:83.5px;color:#212529;font-weight:700;letter-spacing:-0.1px;left:812px;">26469.77</div>
<div class="t" style="top:1735.03px;font-size:29.5px;color:#6c757d;letter-spacing:-0.22px;left:954.5px;transform:translateX(-50%);">Total Revenue</div>
<svg class="a" style="left:685px;top:1810px;" width="18.67" height="28" viewBox="0 0 40 60"><path d="M0 4H40M0 19.5H40M2 4H13Q29 4 29 19.5Q29 35 13 35H5L34 58" fill="none" stroke="#6c757d" stroke-width="8" stroke-linejoin="miter"/></svg>
<div class="t" style="top:1804.14px;font-size:40px;color:#495057;font-weight:700;left:715px;">26469.77</div>
<svg class="a" style="left:1055px;top:1810px;" width="18.67" height="28" viewBox="0 0 40 60"><path d="M0 4H40M0 19.5H40M2 4H13Q29 4 29 19.5Q29 35 13 35H5L34 58" fill="none" stroke="#6c757d" stroke-width="8" stroke-linejoin="miter"/></svg>
<div class="t" style="top:1804.14px;font-size:40px;color:#495057;font-weight:700;left:1085px;">26469.77</div>
<div class="a" style="left:1373px;top:1474px;width:1555px;height:500px;background:#fff;border-radius:30px;box-shadow:0 0 1.5px rgba(0,0,0,0.10),0 0 6px rgba(0,0,0,0.08)"></div>
<div class="t" style="top:1529.22px;font-size:34px;color:#212529;letter-spacing:-0.11px;left:1421.4px;">Vehicle Summary</div>
<div class="a" style="left:1421.4px;top:1611px;width:466px;height:142px;background:#fff;border:2px solid #e6e6e6;border-radius:40px"></div>
<div class="a" style="left:1473.0px;top:1642px;width:80px;height:80px;background:#e8e8e8;border-radius:24px"></div>
<div class="a" style="left:1421.4px;top:1784.5px;width:466px;height:142px;background:#fff;border:2px solid #e6e6e6;border-radius:40px"></div>
<div class="t" style="top:1668.51px;font-size:25.5px;color:#6c757d;letter-spacing:0.3px;left:1586.4px;">Total</div>
<div class="t" style="top:1664.52px;font-size:34px;color:#212529;font-weight:700;letter-spacing:0.4px;right:1187.1px;margin-right:-0.4px;">287</div>
<div class="a" style="left:1919px;top:1611px;width:466px;height:142px;background:#fff;border:2px solid #e6e6e6;border-radius:40px"></div>
<div class="a" style="left:1970.6px;top:1642px;width:80px;height:80px;background:#e8e8e8;border-radius:24px"></div>
<div class="a" style="left:1919px;top:1784.5px;width:466px;height:142px;background:#fff;border:2px solid #e6e6e6;border-radius:40px"></div>
<div class="t" style="top:1668.51px;font-size:25.5px;color:#6c757d;letter-spacing:-0.25px;left:2081px;">Running</div>
<div class="t" style="top:1664.52px;font-size:34px;color:#212529;font-weight:700;letter-spacing:0.4px;right:691.5px;margin-right:-0.4px;">232</div>
<div class="a" style="left:2415px;top:1611px;width:466px;height:142px;background:#fff;border:2px solid #e6e6e6;border-radius:40px"></div>
<div class="a" style="left:2466.6px;top:1642px;width:80px;height:80px;background:#e8e8e8;border-radius:24px"></div>
<div class="a" style="left:2415px;top:1784.5px;width:466px;height:142px;background:#fff;border:2px solid #e6e6e6;border-radius:40px"></div>
<div class="t" style="top:1668.51px;font-size:25.5px;color:#6c757d;letter-spacing:0.3px;left:2578.5px;">Active</div>
<div class="t" style="top:1664.52px;font-size:34px;color:#212529;font-weight:700;letter-spacing:0.4px;right:193.5px;margin-right:-0.4px;">258</div>
<svg class="a" style="left:1470px;top:1638px;" width="90" height="90" viewBox="0 0 90 90"><path d="M33.5 24H53.3Q58.3 24 58.3 29V51.5Q58.3 53.8 56 53.8V57.5Q56 59.5 52.5 59.5Q49 59.5 49 57.5V54.5H38V57.5Q38 59.5 34.5 59.5Q31 59.5 31 57.5V53.8Q28.5 53.8 28.5 51.5V29Q28.5 24 33.5 24Z" fill="#212529"/><rect x="31" y="29.5" width="25" height="13.5" rx="3" fill="#e8e8e8"/><circle cx="34.5" cy="49.5" r="2" fill="#e8e8e8"/><circle cx="52.3" cy="49.5" r="2" fill="#e8e8e8"/><path d="M28.5 33H25.5V40M58.3 33H61.3V40" fill="none" stroke="#212529" stroke-width="2.4"/></svg>
<svg class="a" style="left:1966px;top:1638px;" width="90" height="90" viewBox="0 0 90 90"><path d="M33.5 24H53.3Q58.3 24 58.3 29V51.5Q58.3 53.8 56 53.8V57.5Q56 59.5 52.5 59.5Q49 59.5 49 57.5V54.5H38V57.5Q38 59.5 34.5 59.5Q31 59.5 31 57.5V53.8Q28.5 53.8 28.5 51.5V29Q28.5 24 33.5 24Z" fill="#212529"/><rect x="31" y="29.5" width="25" height="13.5" rx="3" fill="#e8e8e8"/><circle cx="34.5" cy="49.5" r="2" fill="#e8e8e8"/><path d="M28.5 33H25.5V40M58.3 33H61.3V40" fill="none" stroke="#212529" stroke-width="2.4"/><circle cx="52.3" cy="46.2" r="10.2" fill="#e8e8e8"/><circle cx="52.3" cy="46.2" r="9" fill="#212529"/><path d="M48 46.5L51 49.5L56.8 43.5" fill="none" stroke="#e8e8e8" stroke-width="2.2" stroke-linecap="round" stroke-linejoin="round"/></svg>
<svg class="a" style="left:2462px;top:1638px;" width="90" height="90" viewBox="0 0 90 90"><circle cx="44.5" cy="44.5" r="19" fill="#212529"/><path d="M35.5 44.5L42 51L55 38.5" fill="none" stroke="#e8e8e8" stroke-width="3.6" stroke-linecap="round" stroke-linejoin="round"/></svg>
</body></html>
